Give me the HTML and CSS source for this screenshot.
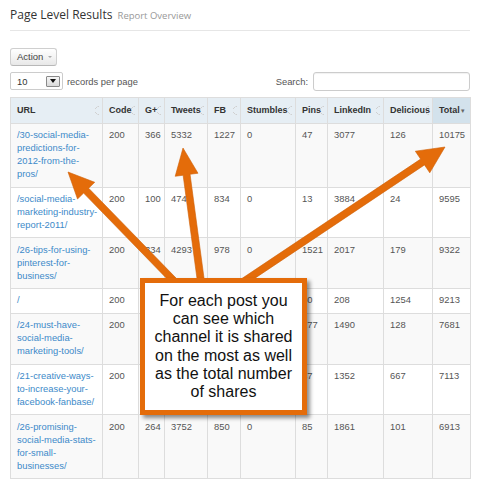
FILE: index.html
```html
<!DOCTYPE html>
<html>
<head>
<meta charset="utf-8">
<link rel="stylesheet" href="styles.css">
</head>
<body>
<div class="page">
  <h1 class="title">Page Level Results <small>Report Overview</small></h1>
  <div class="toolbar">
    <button class="btn">Action <span class="caret"></span></button>
  </div>
  <div class="controls">
    <div class="length">
      <div class="select"><span>10</span><span class="dd"><span class="tri"></span></span></div>
      <span class="lbl">records per page</span>
    </div>
    <div class="search">
      <span class="lbl">Search:</span>
      <span class="input"></span>
    </div>
  </div>
  <table class="results">
    <colgroup>
      <col class="c-url"><col class="c-code"><col class="c-gp"><col class="c-tw"><col class="c-fb"><col class="c-st"><col class="c-pi"><col class="c-li"><col class="c-de"><col class="c-to">
    </colgroup>
    <thead>
      <tr>
        <th>URL<span class="sort"></span></th>
        <th>Code<span class="sort"></span></th>
        <th>G+<span class="sort"></span></th>
        <th>Tweets<span class="sort"></span></th>
        <th>FB<span class="sort"></span></th>
        <th>Stumbles<span class="sort"></span></th>
        <th>Pins<span class="sort"></span></th>
        <th>LinkedIn<span class="sort"></span></th>
        <th>Delicious<span class="sort"></span></th>
        <th class="sorted">Total<span class="desc">&#9662;</span></th>
      </tr>
    </thead>
    <tbody>
      <tr><td><a href="#">/30-social-media-<br>predictions-for-<br>2012-from-the-<br>pros/</a></td><td>200</td><td>366</td><td>5332</td><td>1227</td><td>0</td><td>47</td><td>3077</td><td>126</td><td>10175</td></tr>
      <tr><td><a href="#">/social-media-<br>marketing-industry-<br>report-2011/</a></td><td>200</td><td>100</td><td>4740</td><td>834</td><td>0</td><td>13</td><td>3884</td><td>24</td><td>9595</td></tr>
      <tr><td><a href="#">/26-tips-for-using-<br>pinterest-for-<br>business/</a></td><td>200</td><td>334</td><td>4293</td><td>978</td><td>0</td><td>1521</td><td>2017</td><td>179</td><td>9322</td></tr>
      <tr><td><a href="#">/</a></td><td>200</td><td></td><td></td><td></td><td></td><td>60</td><td>208</td><td>1254</td><td>9213</td></tr>
      <tr><td><a href="#">/24-must-have-<br>social-media-<br>marketing-tools/</a></td><td>200</td><td></td><td></td><td></td><td></td><td>277</td><td>1490</td><td>128</td><td>7681</td></tr>
      <tr><td><a href="#">/21-creative-ways-<br>to-increase-your-<br>facebook-fanbase/</a></td><td>200</td><td></td><td></td><td></td><td></td><td>47</td><td>1352</td><td>667</td><td>7113</td></tr>
      <tr><td><a href="#">/26-promising-<br>social-media-stats-<br>for-small-<br>businesses/</a></td><td>200</td><td>264</td><td>3752</td><td>850</td><td>0</td><td>85</td><td>1861</td><td>101</td><td>6913</td></tr>
    </tbody>
  </table>
</div>

<svg class="arrows" width="480" height="479" viewBox="0 0 480 479">
  <polygon points="177.51,279.56 88.64,188.20 94.73,182.27 68,172 77.53,199.01 83.62,193.08 172.49,284.44"/>
  <polygon points="204.47,281.53 190.06,174.29 197.99,173.23 183,148 175.19,176.29 183.12,175.23 197.53,282.47"/>
  <polygon points="244.95,284.91 424.50,164.91 429.77,172.81 445,147 415.33,151.19 420.61,159.09 241.06,279.09"/>
</svg>

<div class="callout">For each post you<br>can see which<br>channel it is shared<br>on the most as well<br>as the total number<br>of shares</div>
</body>
</html>
```

FILE: styles.css
```css
html, body {
  margin: 0;
  padding: 0;
  background: #fff;
}
body {
  width: 480px;
  height: 479px;
  overflow: hidden;
  font-family: "Liberation Sans", Arial, sans-serif;
}
.page {
  padding: 0 10px;
}
.title {
  margin: 0;
  padding: 7px 0 6px;
  border-bottom: 1px solid #e6e6e6;
  font-family: "Open Sans", "Liberation Sans", sans-serif;
  font-size: 12px;
  line-height: 16px;
  font-weight: normal;
  color: #333;
}
.title small {
  font-size: 9.5px;
  color: #999;
  margin-left: 2px;
}
.toolbar {
  margin-top: 15px;
  height: 18px;
}
.btn {
  display: inline-flex;
  align-items: center;
  height: 18px;
  width: 47px;
  padding: 0 6px;
  margin: 0;
  box-sizing: border-box;
  border: 1px solid #cfcfcf;
  border-bottom-color: #b8b8b8;
  border-radius: 3px;
  background: linear-gradient(#ffffff, #e8e8e8);
  font-family: "Liberation Sans", Arial, sans-serif;
  font-size: 9.5px;
  color: #444;
}
.caret {
  display: inline-block;
  width: 0;
  height: 0;
  margin-left: 5px;
  border-left: 2.5px solid transparent;
  border-right: 2.5px solid transparent;
  border-top: 2.5px solid #aaa;
}
.controls {
  margin-top: 7px;
  height: 20px;
  display: flex;
  justify-content: space-between;
  align-items: center;
  font-size: 9.4px;
  color: #555;
}
.length, .search {
  display: flex;
  align-items: center;
}
.select {
  width: 53px;
  height: 18px;
  box-sizing: border-box;
  border: 1px solid #ccc;
  border-radius: 2px;
  background: #fff;
  display: flex;
  align-items: center;
  justify-content: space-between;
  padding: 0 2px 0 6px;
  color: #333;
}
.dd {
  width: 14px;
  height: 11px;
  box-sizing: border-box;
  border: 1px solid #8a8a8a;
  border-radius: 1px;
  background: linear-gradient(#f6f6f6, #d9d9d9);
  display: flex;
  align-items: center;
  justify-content: center;
}
.tri {
  width: 0;
  height: 0;
  border-left: 3px solid transparent;
  border-right: 3px solid transparent;
  border-top: 4px solid #111;
}
.length .lbl {
  margin-left: 4px;
}
.search .lbl {
  margin-right: 5px;
}
.input {
  display: block;
  width: 157px;
  height: 19px;
  box-sizing: border-box;
  border: 1px solid #ccc;
  border-radius: 3px;
  background: #fff;
  box-shadow: inset 0 1px 1px rgba(0,0,0,0.06);
}
.results {
  margin-top: 6px;
  width: 460px;
  table-layout: fixed;
  border-collapse: collapse;
  border: 1px solid #dddddd;
  font-size: 9.4px;
  color: #555;
}
.c-url { width: 92px; }
.c-code { width: 36px; }
.c-gp { width: 26px; }
.c-tw { width: 43px; }
.c-fb { width: 33px; }
.c-st { width: 55px; }
.c-pi { width: 32px; }
.c-li { width: 56px; }
.c-de { width: 49px; }
.c-to { width: 38px; }
.results th, .results td {
  padding: 5.5px 6px;
  line-height: 12.9px;
  border: 1px solid #dddddd;
  vertical-align: top;
  text-align: left;
  white-space: nowrap;
  overflow: visible;
}
.results th {
  position: relative;
  background: #e6eef4;
  color: #333;
  font-size: 9px;
  font-weight: bold;
}
.results th.sorted {
  background: #d3e2ec;
}
.sort {
  position: absolute;
  right: 2px;
  top: 8px;
  width: 5px;
  height: 9px;
  background:
    linear-gradient(to bottom right, transparent 45%, #d0d0d0 46%, #d0d0d0 60%, transparent 61%) 0 0 / 2.5px 3px no-repeat,
    linear-gradient(to bottom left, transparent 45%, #d0d0d0 46%, #d0d0d0 60%, transparent 61%) 2.5px 0 / 2.5px 3px no-repeat,
    linear-gradient(to top right, transparent 45%, #d0d0d0 46%, #d0d0d0 60%, transparent 61%) 0 6px / 2.5px 3px no-repeat,
    linear-gradient(to top left, transparent 45%, #d0d0d0 46%, #d0d0d0 60%, transparent 61%) 2.5px 6px / 2.5px 3px no-repeat;
}
.desc {
  font-size: 7px;
  color: #666;
  margin-left: 1px;
  font-weight: normal;
}
.results tbody tr:nth-child(odd) td {
  background: #f9f9f9;
}
.results tbody tr:nth-child(even) td {
  background: #ffffff;
}
.results a {
  color: #3d8ac9;
  text-decoration: none;
}
.arrows {
  position: absolute;
  left: 0;
  top: 0;
  pointer-events: none;
}
.arrows polygon {
  fill: #e46c0a;
  stroke: #cf5f06;
  stroke-width: 0.6;
  stroke-linejoin: miter;
}
.callout {
  position: absolute;
  left: 140px;
  top: 278px;
  width: 167px;
  height: 137px;
  box-sizing: border-box;
  border: 5px solid #e46c0a;
  background: #fff;
  box-shadow: 3px 3px 4px rgba(0,0,0,0.45);
  display: flex;
  align-items: center;
  justify-content: center;
  text-align: center;
  font-family: "Liberation Sans", Arial, sans-serif;
  font-size: 16px;
  line-height: 18.3px;
  color: #111;
}
```
